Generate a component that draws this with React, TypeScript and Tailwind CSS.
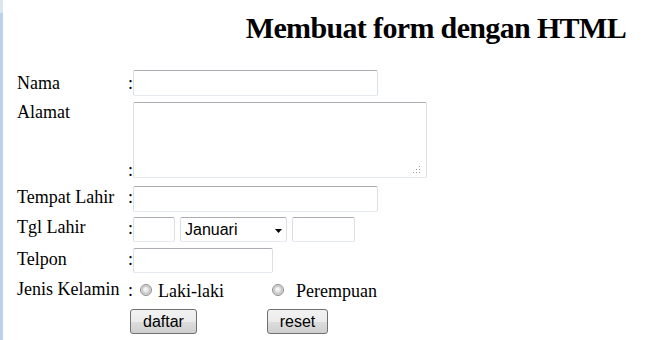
import React from "react";

const box =
  "border border-t-[#abadb3] border-x-[#dbdfe6] border-b-[#e3e9ef] rounded-[2px] bg-white shrink-0";

const btn =
  "h-[25px] border border-[#707070] rounded-[3px] bg-[linear-gradient(to_bottom,#f2f2f2_0%,#ebebeb_50%,#dddddd_50%,#cfcfcf_100%)] font-['Liberation_Sans',Arial,sans-serif] text-[16px] leading-[23px] text-black text-center";

const Radio = () => (
  <svg width="12" height="12" viewBox="0 0 12 12" className="shrink-0">
    <defs>
      <radialGradient id="rg" cx="45%" cy="40%" r="60%">
        <stop offset="0%" stopColor="#ffffff" />
        <stop offset="100%" stopColor="#cfcfcf" />
      </radialGradient>
    </defs>
    <circle cx="6" cy="6" r="5.5" fill="#d9d9d9" stroke="#8e8f8f" />
    <circle cx="6" cy="6" r="3.8" fill="url(#rg)" stroke="#b9b9b9" strokeWidth="0.6" />
  </svg>
);

const Grip = () => (
  <svg width="8" height="7" viewBox="0 0 8 7" className="absolute right-[5px] bottom-[4px]">
    <rect x="6" y="0" width="1" height="1" fill="#9a9a9a" />
    <rect x="3" y="3" width="1" height="1" fill="#9a9a9a" />
    <rect x="6" y="3" width="1" height="1" fill="#9a9a9a" />
    <rect x="0" y="6" width="1" height="1" fill="#9a9a9a" />
    <rect x="3" y="6" width="1" height="1" fill="#9a9a9a" />
    <rect x="6" y="6" width="1" height="1" fill="#9a9a9a" />
  </svg>
);

export default function App() {
  return (
    <div className="flex min-h-[340px] bg-white">
      {/* window frame edge */}
      <div className="flex w-[3px] shrink-0 flex-col">
        <div className="h-[13px] bg-[#dbe6f3]" />
        <div className="flex-1 bg-[#bcd2ec]" />
      </div>

      <div className="flex-1 pl-[14px] font-['Liberation_Serif','Times_New_Roman',serif] text-[18px] text-black">
        <div className="flex justify-end pr-[20px] pt-[10px]">
          <h1 className="whitespace-nowrap text-[30px] font-bold leading-[36px] tracking-[-0.65px]">
            Membuat form dengan HTML
          </h1>
        </div>

        {/* Nama */}
        <div className="mt-[24px] flex">
          <div className="w-[111px] shrink-0 pt-[3px] leading-[20px]">Nama</div>
          <div className="w-[5px] shrink-0 pt-[3px] leading-[20px]">:</div>
          <div className={`${box} h-[26px] w-[245px]`} />
        </div>

        {/* Alamat */}
        <div className="mt-[6px] flex">
          <div className="w-[111px] shrink-0 leading-[20px]">Alamat</div>
          <div className="w-[5px] shrink-0 pt-[58px] leading-[20px]">:</div>
          <div className={`${box} relative h-[76px] w-[294px]`}>
            <Grip />
          </div>
        </div>

        {/* Tempat Lahir */}
        <div className="mt-[6px] flex">
          <div className="w-[111px] shrink-0 pt-[1px] leading-[20px]">Tempat Lahir</div>
          <div className="w-[5px] shrink-0 pt-[1px] leading-[20px]">:</div>
          <div className={`${box} h-[26px] w-[245px]`} />
        </div>

        {/* Tgl Lahir */}
        <div className="mt-[5px] flex">
          <div className="w-[111px] shrink-0 leading-[20px]">Tgl Lahir</div>
          <div className="w-[5px] shrink-0 pt-[1px] leading-[20px]">:</div>
          <div className={`${box} h-[25px] w-[42px]`} />
          <div
            className={`${box} relative ml-[5px] h-[25px] w-[107px] pl-[4px] pt-[3px] font-['Liberation_Sans',Arial,sans-serif] text-[16px] leading-[18px]`}
          >
            Januari
            <svg width="7" height="4" viewBox="0 0 7 4" className="absolute right-[4px] top-[11px]">
              <polygon points="0,0 7,0 3.5,4" fill="#000" />
            </svg>
          </div>
          <div className={`${box} ml-[5px] h-[25px] w-[63px]`} />
        </div>

        {/* Telpon */}
        <div className="mt-[6px] flex">
          <div className="w-[111px] shrink-0 pt-[1px] leading-[20px]">Telpon</div>
          <div className="w-[5px] shrink-0 pt-[1px] leading-[20px]">:</div>
          <div className={`${box} h-[25px] w-[140px]`} />
        </div>

        {/* Jenis Kelamin */}
        <div className="mt-[5px] flex h-[24px]">
          <div className="w-[111px] shrink-0 pt-[1px] leading-[20px]">Jenis Kelamin</div>
          <div className="w-[5px] shrink-0 pt-[2px] leading-[20px]">:</div>
          <div className="ml-[7px] flex w-[132px] shrink-0">
            <div className="pt-[6px]">
              <Radio />
            </div>
            <span className="ml-[6px] pt-[3px] leading-[20px]">Laki-laki</span>
          </div>
          <div className="pt-[6px]">
            <Radio />
          </div>
          <span className="ml-[12px] pt-[3px] leading-[20px]">Perempuan</span>
        </div>

        {/* Buttons */}
        <div className="mt-[7px] flex pl-[113px]">
          <button className={`${btn} w-[67px]`}>daftar</button>
          <button className={`${btn} ml-[70px] w-[61px]`}>reset</button>
        </div>
      </div>
    </div>
  );
}
